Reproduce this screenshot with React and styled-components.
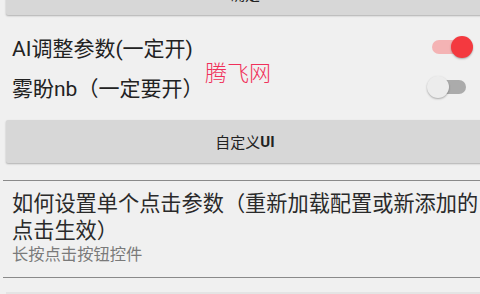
import React from 'react'
import styled, { createGlobalStyle } from 'styled-components'

const Global = createGlobalStyle`
  html, body {
    margin: 0;
    padding: 0;
    background: #f0f0f0;
    overflow: hidden;
  }
  body {
    font-family: Roboto, "Noto Sans CJK SC", sans-serif;
  }
`

const App = () => {
  return (
    <>
      <Global />
      <Page>
        <Button>确定</Button>

        <SwitchGroup>
          <SwitchRow>
            <Label>AI调整参数(一定开)</Label>
            <Switch on />
          </SwitchRow>
          <SwitchRow>
            <Label>雾盼nb（一定要开）</Label>
            <Switch />
          </SwitchRow>
        </SwitchGroup>

        <Button>自定义<b>UI</b></Button>

        <Divider gap={17} />
        <Preference>
          <Title>如何设置单个点击参数（重新加载配置或新添加的点击生效）</Title>
          <Summary>长按点击按钮控件</Summary>
        </Preference>
        <Divider gap={0} />
        <NextButton />

        <Watermark>腾飞网</Watermark>
      </Page>
    </>
  )
}

export default App

const Switch = ({ on }) => (
  <SwitchBox>
    <Track on={on ? 1 : 0} />
    <Thumb on={on ? 1 : 0} />
  </SwitchBox>
)

const Page = styled.div`
  position: relative;
  width: 490px;
  margin-top: -28px;
  display: flex;
  flex-direction: column;
`

const Button = styled.div`
  height: 43px;
  margin: 0 6px;
  background: #d7d7d7;
  box-shadow: 0 1px 2px rgba(0, 0, 0, 0.28);
  border-radius: 2px;
  display: flex;
  align-items: center;
  justify-content: center;
  font-size: 15px;
  color: #222;
  b {
    font-weight: 700;
  }
`

const SwitchGroup = styled.div`
  padding: 12px 0 13px;
  display: flex;
  flex-direction: column;
`

const SwitchRow = styled.div`
  height: 40px;
  padding: 0 17px 0 12px;
  display: flex;
  align-items: center;
  justify-content: space-between;
`

const Label = styled.span`
  font-size: 21px;
  color: #222;
`

const SwitchBox = styled.div`
  position: relative;
  width: 46px;
  height: 24px;
`

const Track = styled.div`
  position: absolute;
  left: 5px;
  right: 7px;
  top: 5px;
  height: 14px;
  border-radius: 7px;
  background: ${p => (p.on ? '#f4b3b4' : '#ababab')};
`

const Thumb = styled.div`
  position: absolute;
  top: 1px;
  left: ${p => (p.on ? '24px' : '0')};
  width: 22px;
  height: 22px;
  border-radius: 50%;
  background: ${p => (p.on ? '#f4393f' : '#ececec')};
  box-shadow: 0 1px 2px rgba(0, 0, 0, 0.3);
`

const Divider = styled.div`
  height: 1px;
  margin: ${p => p.gap}px 3px 0;
  background: #8a8a8a;
`

const Preference = styled.div`
  padding: 9px 0 11px 12px;
  display: flex;
  flex-direction: column;
`

const Title = styled.div`
  font-size: 21.2px;
  line-height: 27px;
  color: #2a2a2a;
`

const Summary = styled.div`
  font-size: 16.3px;
  line-height: 22px;
  color: #7a7a7a;
`

const NextButton = styled.div`
  height: 30px;
  margin: 14px 6px 0;
  background: #e4e4e4;
`

const Watermark = styled.div`
  position: absolute;
  left: 205px;
  top: 83px;
  font-size: 22px;
  font-weight: 300;
  color: #f0305a;
  font-family: "Noto Sans CJK SC", sans-serif;
`
